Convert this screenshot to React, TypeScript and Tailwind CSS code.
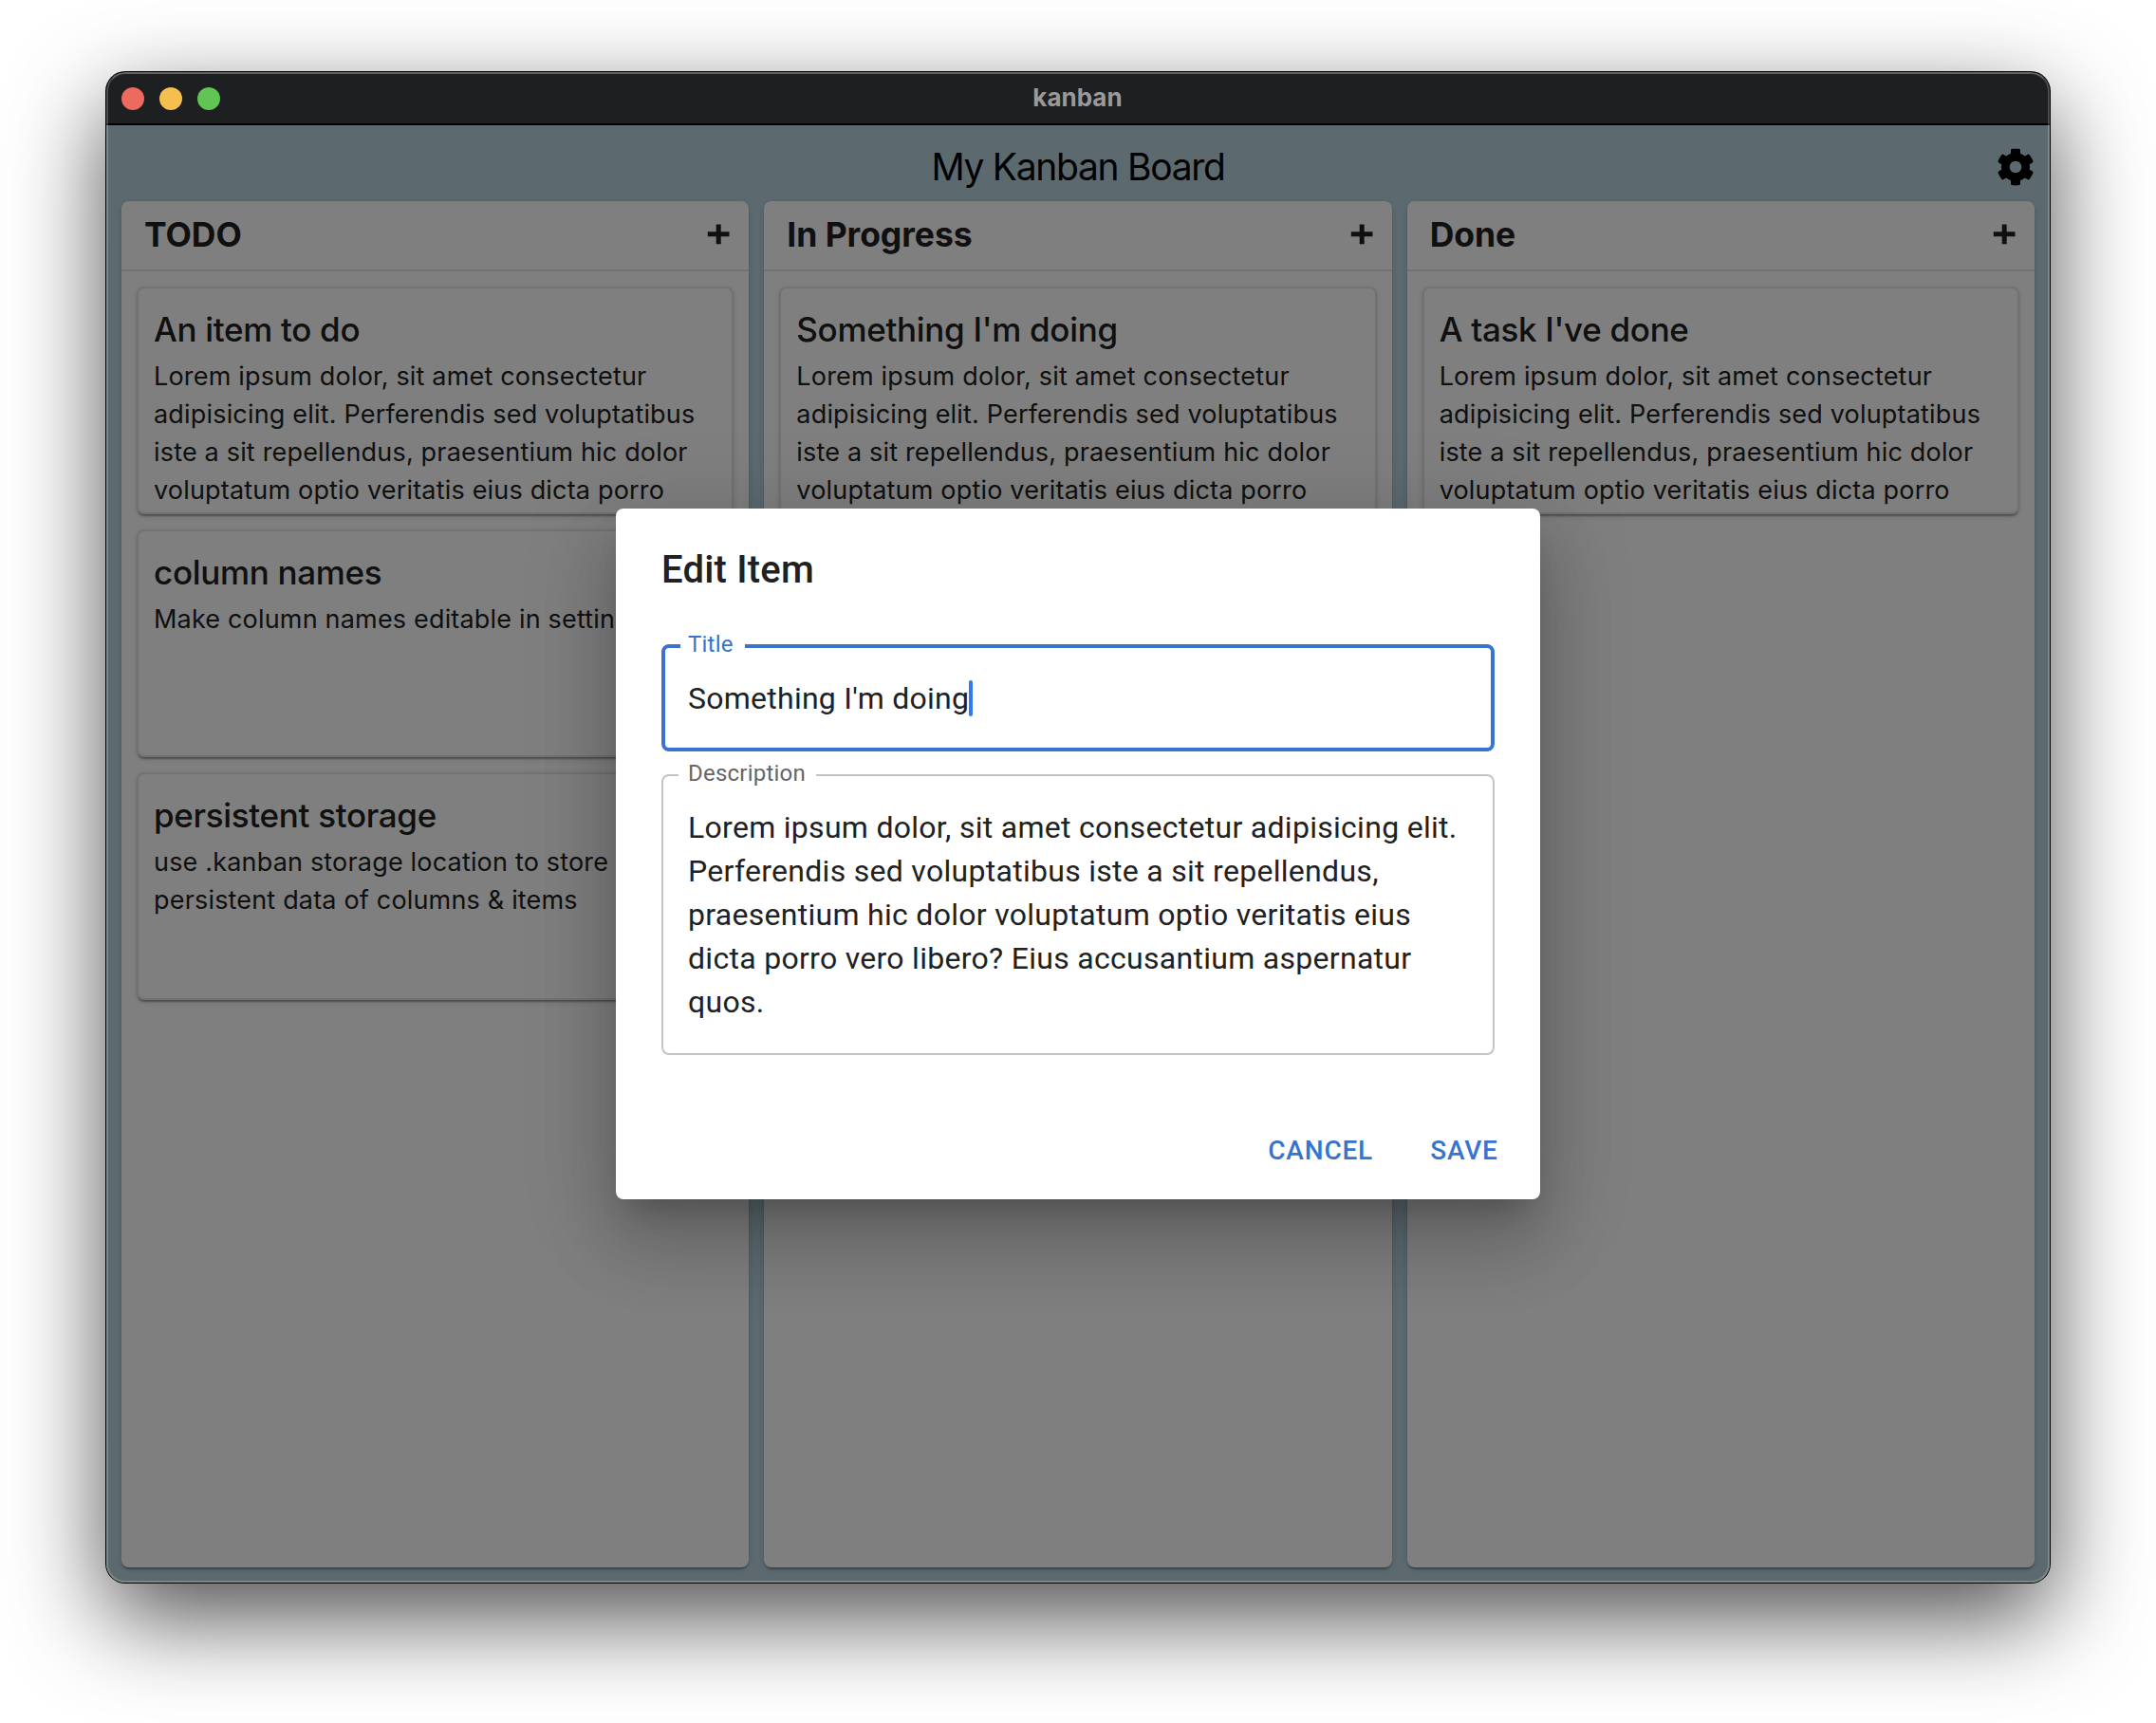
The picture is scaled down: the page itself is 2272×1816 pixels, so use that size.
import { FaCog } from "react-icons/fa";

type Item = { title: string; body: string };
type ColumnData = { name: string; items: Item[] };

const lorem =
  "Lorem ipsum dolor, sit amet consectetur\nadipisicing elit. Perferendis sed voluptatibus\niste a sit repellendus, praesentium hic dolor\nvoluptatum optio veritatis eius dicta porro";

const description =
  "Lorem ipsum dolor, sit amet consectetur adipisicing elit.\nPerferendis sed voluptatibus iste a sit repellendus,\npraesentium hic dolor voluptatum optio veritatis eius\ndicta porro vero libero? Eius accusantium aspernatur\nquos.";

const columns: ColumnData[] = [
  {
    name: "TODO",
    items: [
      { title: "An item to do", body: lorem },
      { title: "column names", body: "Make column names editable in settings" },
      {
        title: "persistent storage",
        body: "use .kanban storage location to store\npersistent data of columns & items",
      },
    ],
  },
  { name: "In Progress", items: [{ title: "Something I'm doing", body: lorem }] },
  { name: "Done", items: [{ title: "A task I've done", body: lorem }] },
];

function PlusIcon() {
  return (
    <svg viewBox="0 0 24 22" className="mb-0.5 h-[22px] w-6" fill="currentColor" aria-hidden="true">
      <path d="M9.7 0.5h5v7.8h8.8v5h-8.8v8h-5v-8H0.8v-5h8.9z" />
    </svg>
  );
}

function Card({ item }: { item: Item }) {
  return (
    <article className="h-60 overflow-hidden rounded-lg border-2 border-black/10 bg-white px-4 pt-4 shadow-[0_4px_2px_-2px_rgba(0,0,0,0.2),0_2px_2px_0_rgba(0,0,0,0.14),0_2px_6px_0_rgba(0,0,0,0.12)]">
      <h3 className="mb-[3px] text-[35px] leading-[54px] font-medium tracking-[-0.32px] whitespace-nowrap">
        {item.title}
      </h3>
      <p className="text-[27px] leading-10 tracking-[0.18px] whitespace-pre">{item.body}</p>
    </article>
  );
}

function Column({ column }: { column: ColumnData }) {
  return (
    <section className="flex min-w-0 flex-1 flex-col rounded-lg bg-white text-[#212121] shadow-[0_4px_2px_-2px_rgba(0,0,0,0.2),0_2px_2px_0_rgba(0,0,0,0.14),0_2px_6px_0_rgba(0,0,0,0.12)]">
      <header className="flex h-[74px] items-center justify-between border-b-2 border-black/12 pr-5 pb-px pl-6">
        <h2 className="text-[35.5px] leading-9 font-bold tracking-[-0.05px]">{column.name}</h2>
        <PlusIcon />
      </header>
      <div className="flex flex-col gap-4 p-4">
        {column.items.map((item) => (
          <Card key={item.title} item={item} />
        ))}
      </div>
    </section>
  );
}

function EditDialog() {
  return (
    <div className="flex h-[728px] w-[974px] flex-col rounded-lg bg-white font-[Roboto,sans-serif] text-[#212121] shadow-[0_22px_30px_-14px_rgba(0,0,0,0.2),0_48px_76px_6px_rgba(0,0,0,0.14),0_18px_92px_16px_rgba(0,0,0,0.12)]">
      <h2 className="px-12 pt-[33px] text-[40px] leading-[64px] font-medium tracking-[0.2px]">Edit Item</h2>
      <div className="flex flex-col gap-6 px-12 pt-[46px]">
        <div className="relative h-[113px] rounded-lg border-4 border-[#3874cf] px-6 pt-[30px]">
          <span className="absolute top-[-21px] left-4 bg-white pr-3 pl-2 text-[24px] leading-[34px] tracking-[0.22px] text-[#3874cf]">
            Title
          </span>
          <div className="flex items-center">
            <span className="text-[32px] leading-[46px] tracking-[0.25px]">Something I'm doing</span>
            <span className="h-[38px] w-1 rounded-sm bg-[#3478f6]" />
          </div>
        </div>
        <div className="relative h-[296px] rounded-lg border-2 border-[#c4c4c4] px-[26px] pt-[31px]">
          <span className="absolute top-[-20px] left-4 bg-white pr-[11px] pl-2.5 text-[24px] leading-[34px] tracking-[0.22px] text-[#666666]">
            Description
          </span>
          <p className="text-[32px] leading-[46px] tracking-[0.29px] whitespace-pre">{description}</p>
        </div>
      </div>
      <div className="mt-auto flex justify-end gap-4 px-4 pb-[15px] text-[28px] leading-[49px] font-medium tracking-[0.8px] text-[#3874cf]">
        <button className="px-4 py-3">CANCEL</button>
        <button className="min-w-32 py-3 text-center">SAVE</button>
      </div>
    </div>
  );
}

export default function App() {
  return (
    <div className="flex h-[1816px] w-[2272px] flex-col items-center overflow-hidden bg-white pt-[76px] font-[Inter,sans-serif]">
      <div className="relative flex h-[1592px] w-[2048px] flex-col overflow-clip rounded-[20px] bg-[#1e1f21] shadow-[0_0_0_1px_#000,0_36px_100px_rgba(0,0,0,0.7)]">
        <div className="flex h-14 items-center border-b-2 border-black px-4">
          <div className="flex flex-1 gap-4 pt-0.5">
            <span className="size-6 rounded-full bg-[#ed6a5f]" />
            <span className="size-6 rounded-full bg-[#f5bf4f]" />
            <span className="size-6 rounded-full bg-[#61c554]" />
          </div>
          <span className="pr-px text-[26px] leading-8 font-bold text-[#99999a]">kanban</span>
          <div className="flex-1" />
        </div>
        <div className="relative flex flex-1 flex-col bg-[#b8d4e1] px-4 pb-4">
          <header className="flex h-20 items-center pt-2">
            <div className="flex-1" />
            <h1 className="text-[39px] leading-[48px] tracking-[-1.3px] text-black">My Kanban Board</h1>
            <div className="flex flex-1 justify-end">
              <FaCog className="size-10 text-black" />
            </div>
          </header>
          <main className="flex flex-1 gap-4">
            {columns.map((column) => (
              <Column key={column.name} column={column} />
            ))}
          </main>
          <div className="absolute inset-0 flex items-center justify-center bg-black/50">
            <EditDialog />
          </div>
        </div>
        <div className="pointer-events-none absolute inset-0 rounded-[20px] border-2 border-white/20 border-t-white/30" />
      </div>
    </div>
  );
}
